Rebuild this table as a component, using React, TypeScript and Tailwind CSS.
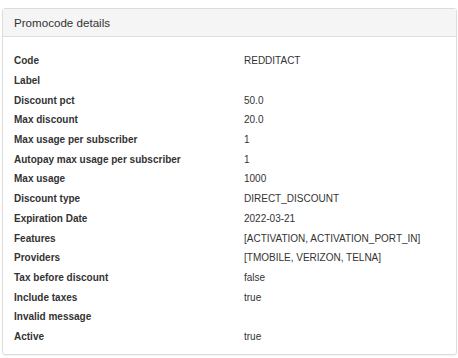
import React from "react";

const rows: [string, string][] = [
  ["Code", "REDDITACT"],
  ["Label", ""],
  ["Discount pct", "50.0"],
  ["Max discount", "20.0"],
  ["Max usage per subscriber", "1"],
  ["Autopay max usage per subscriber", "1"],
  ["Max usage", "1000"],
  ["Discount type", "DIRECT_DISCOUNT"],
  ["Expiration Date", "2022-03-21"],
  ["Features", "[ACTIVATION, ACTIVATION_PORT_IN]"],
  ["Providers", "[TMOBILE, VERIZON, TELNA]"],
  ["Tax before discount", "false"],
  ["Include taxes", "true"],
  ["Invalid message", ""],
  ["Active", "true"],
];

export default function App() {
  return (
    <div className="w-[458px] h-[358px] bg-white pt-[8px] pl-[2px] pr-[1px] font-['Liberation_Sans',Arial,sans-serif] text-[#333]">
      <div className="border border-[#dddddd] rounded-[3px] h-[347px] shadow-[0_1px_1px_rgba(0,0,0,0.05)]">
        <div className="h-[28px] bg-[#f5f5f5] border-b border-[#dddddd] flex items-center pl-[11px] text-[11.6px]">
          Promocode details
        </div>
        <div className="pt-[14px] pl-[11px]">
          {rows.map(([k, v]) => (
            <div key={k} className="flex h-[19.7px] items-center text-[10px]">
              <div className="w-[230px] font-bold">{k}</div>
              <div>{v}</div>
            </div>
          ))}
        </div>
      </div>
    </div>
  );
}
